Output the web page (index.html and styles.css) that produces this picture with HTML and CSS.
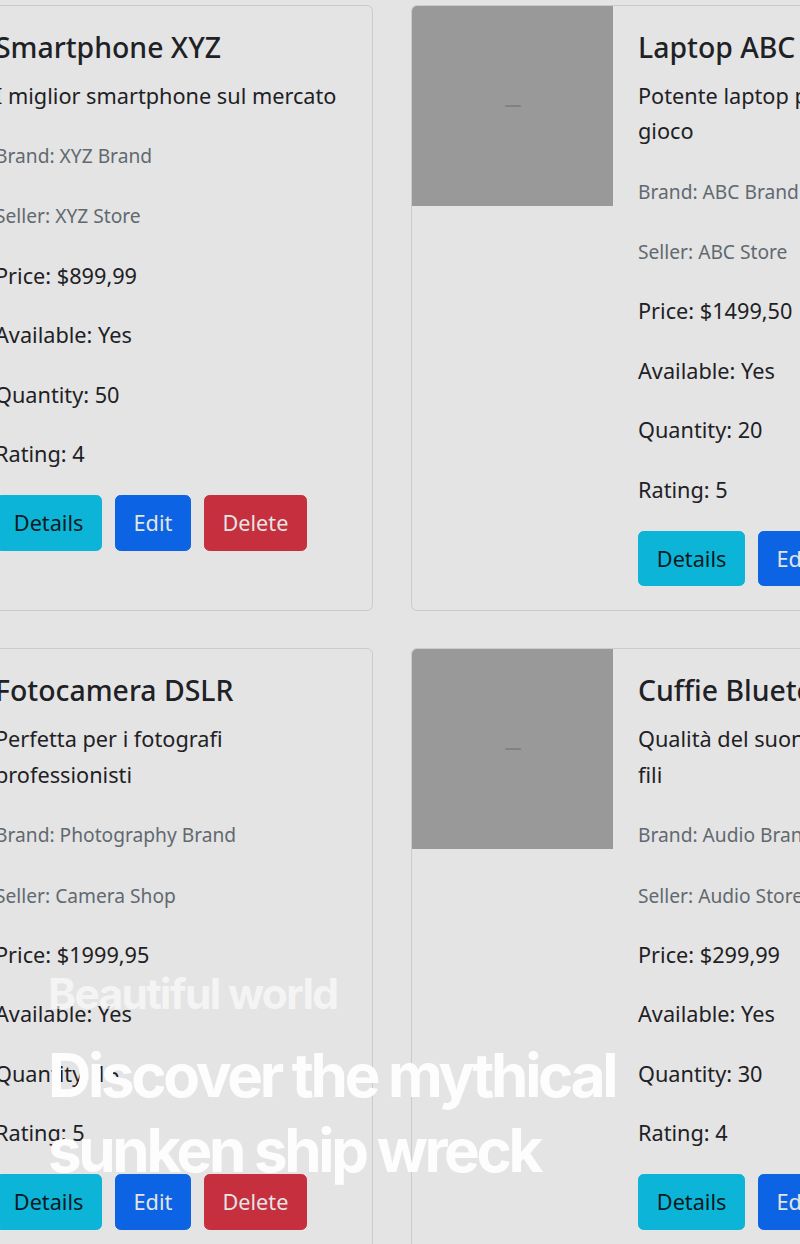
FILE: index.html
```html
<!DOCTYPE html>
<html lang="it">
<head>
<meta charset="utf-8">
<title>Products</title>
<link rel="stylesheet" href="styles.css">
</head>
<body>
<main class="grid">
  <article class="card">
    <div class="card-body">
      <h5 class="card-title">Smartphone XYZ</h5>
      <p class="card-text">I miglior smartphone sul mercato</p>
      <p class="card-text"><small class="muted">Brand: XYZ Brand</small></p>
      <p class="card-text"><small class="muted">Seller: XYZ Store</small></p>
      <p class="card-text">Price: $899,99</p>
      <p class="card-text">Available: Yes</p>
      <p class="card-text">Quantity: 50</p>
      <p class="card-text">Rating: 4</p>
      <div class="actions">
        <button class="btn btn-info">Details</button>
        <button class="btn btn-primary">Edit</button>
        <button class="btn btn-danger">Delete</button>
      </div>
    </div>
  </article>
  <article class="card">
    <div class="card-img"><span class="alt-mark"></span></div>
    <div class="card-body">
      <h5 class="card-title">Laptop ABC</h5>
      <p class="card-text">Potente laptop per il gioco</p>
      <p class="card-text"><small class="muted">Brand: ABC Brand</small></p>
      <p class="card-text"><small class="muted">Seller: ABC Store</small></p>
      <p class="card-text">Price: $1499,50</p>
      <p class="card-text">Available: Yes</p>
      <p class="card-text">Quantity: 20</p>
      <p class="card-text">Rating: 5</p>
      <div class="actions">
        <button class="btn btn-info">Details</button>
        <button class="btn btn-primary">Edit</button>
        <button class="btn btn-danger">Delete</button>
      </div>
    </div>
  </article>
  <article class="card">
    <div class="card-body">
      <h5 class="card-title">Fotocamera DSLR</h5>
      <p class="card-text">Perfetta per i fotografi professionisti</p>
      <p class="card-text"><small class="muted">Brand: Photography Brand</small></p>
      <p class="card-text"><small class="muted">Seller: Camera Shop</small></p>
      <p class="card-text">Price: $1999,95</p>
      <p class="card-text">Available: Yes</p>
      <p class="card-text">Quantity: 15</p>
      <p class="card-text">Rating: 5</p>
      <div class="actions">
        <button class="btn btn-info">Details</button>
        <button class="btn btn-primary">Edit</button>
        <button class="btn btn-danger">Delete</button>
      </div>
    </div>
  </article>
  <article class="card">
    <div class="card-img"><span class="alt-mark"></span></div>
    <div class="card-body">
      <h5 class="card-title">Cuffie Bluetooth</h5>
      <p class="card-text">Qualità del suono senza fili</p>
      <p class="card-text"><small class="muted">Brand: Audio Brand</small></p>
      <p class="card-text"><small class="muted">Seller: Audio Store</small></p>
      <p class="card-text">Price: $299,99</p>
      <p class="card-text">Available: Yes</p>
      <p class="card-text">Quantity: 30</p>
      <p class="card-text">Rating: 4</p>
      <div class="actions">
        <button class="btn btn-info">Details</button>
        <button class="btn btn-primary">Edit</button>
        <button class="btn btn-danger">Delete</button>
      </div>
    </div>
  </article>
</main>
<section class="hero">
  <p class="hero-sub">Beautiful world</p>
  <h1 class="hero-title">Discover the mythical sunken ship wreck</h1>
</section>
</body>
</html>
```
FILE: styles.css
```css
html, body {
  margin: 0;
  padding: 0;
}
body {
  width: 800px;
  height: 1244px;
  overflow: hidden;
  position: relative;
  background: #e4e4e4;
  font-family: "Noto Sans", "Open Sans", sans-serif;
  font-size: 21.7px;
  line-height: 35.64px;
  color: #1e2125;
}
.grid {
  display: grid;
  grid-template-columns: 404px 520px;
  column-gap: 38px;
  row-gap: 37px;
  margin: 5px 0 0 -31px;
}
.card {
  display: flex;
  align-items: flex-start;
  border: 1.5px solid #cbcbcb;
  border-radius: 6px;
}
.card-img {
  flex: none;
  width: 201px;
  height: 200px;
  background: #999999;
  border-top-left-radius: 5px;
  display: flex;
  align-items: center;
  justify-content: center;
}
.alt-mark {
  display: block;
  width: 16px;
  height: 2px;
  background: #7a7a7a;
  border-radius: 1px;
  opacity: 0.8;
}
.card-body {
  flex: 1;
  min-width: 0;
  padding: 24px 25px;
}
.card-title {
  margin: 0 0 12px 0;
  font-size: 28.4px;
  line-height: 35.64px;
  font-weight: 500;
  color: #1e2125;
}
.card-text {
  margin: 0 0 23.76px 0;
}
.muted {
  font-size: 19.2px;
  color: #616970;
}
.actions {
  display: flex;
  gap: 12.5px;
}
.btn {
  font-family: inherit;
  font-size: 21.7px;
  line-height: 35.64px;
  padding: 8.9px 17.8px;
  border: 1.5px solid transparent;
  border-radius: 5.6px;
  cursor: pointer;
}
.btn-info {
  background: #0cb5d7;
  border-color: #0cb5d7;
  color: #0a1a1e;
}
.btn-primary {
  background: #0c63e3;
  border-color: #0c63e3;
  color: #e4e4e4;
}
.btn-danger {
  background: #c52f3e;
  border-color: #c52f3e;
  color: #e4e4e4;
}
.hero {
  position: absolute;
  left: 48px;
  top: 970px;
  width: 640px;
  font-family: Inter, "Liberation Sans", sans-serif;
  color: #ffffff;
}
.hero-sub {
  margin: 0 0 20px 0;
  font-size: 42.5px;
  line-height: 48px;
  font-weight: 700;
  letter-spacing: -0.04em;
  color: rgba(255, 255, 255, 0.6);
}
.hero-title {
  margin: 0;
  font-size: 60px;
  line-height: 75px;
  font-weight: 700;
  letter-spacing: -0.055em;
  color: #fdfdfd;
}
```
